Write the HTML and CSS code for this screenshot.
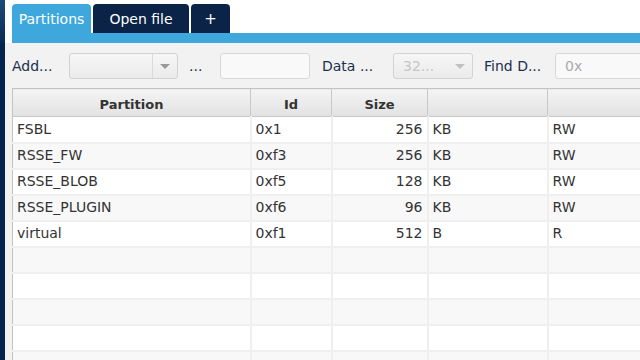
FILE: index.html
```html
<!DOCTYPE html>
<html lang="en">

<head>
    <meta charset="UTF-8">
    <title>Partitions</title>
    <link rel="stylesheet" href="styles.css">
</head>

<body>
    <div class="sidebar"></div>
    <div class="main">
        <div class="tabs">
            <div class="tab active tabPartitions">Partitions</div>
            <div class="tab tabOpen">Open file</div>
            <div class="tab tabPlus">+</div>
        </div>
        <div class="tabLine"></div>

        <div class="content">
            <div class="toolbar">
                <span class="label lblAdd">Add...</span>
                <div class="combo comboAdd">
                    <span class="comboText"></span>
                    <span class="comboArrow"><i class="tri"></i></span>
                </div>
                <span class="label lblDots">...</span>
                <div class="field fieldA"></div>
                <span class="label lblData">Data ...</span>
                <div class="combo comboData disabled">
                    <span class="comboText">32...</span>
                    <span class="comboArrow noSep"><i class="tri"></i></span>
                </div>
                <span class="label lblFind">Find D...</span>
                <div class="field fieldFind"><span class="placeholder">0x</span></div>
            </div>

            <table class="grid">
                <thead>
                    <tr>
                        <th class="c1">Partition</th>
                        <th class="c2">Id</th>
                        <th class="c3">Size</th>
                        <th class="c4"></th>
                        <th class="c5"></th>
                    </tr>
                </thead>
                <tbody>
                    <tr>
                        <td>FSBL</td>
                        <td>0x1</td>
                        <td class="num">256</td>
                        <td>KB</td>
                        <td>RW</td>
                    </tr>
                    <tr>
                        <td>RSSE_FW</td>
                        <td>0xf3</td>
                        <td class="num">256</td>
                        <td>KB</td>
                        <td>RW</td>
                    </tr>
                    <tr>
                        <td>RSSE_BLOB</td>
                        <td>0xf5</td>
                        <td class="num">128</td>
                        <td>KB</td>
                        <td>RW</td>
                    </tr>
                    <tr>
                        <td>RSSE_PLUGIN</td>
                        <td>0xf6</td>
                        <td class="num">96</td>
                        <td>KB</td>
                        <td>RW</td>
                    </tr>
                    <tr>
                        <td>virtual</td>
                        <td>0xf1</td>
                        <td class="num">512</td>
                        <td>B</td>
                        <td>R</td>
                    </tr>
                    <tr><td></td><td></td><td></td><td></td><td></td></tr>
                    <tr><td></td><td></td><td></td><td></td><td></td></tr>
                    <tr><td></td><td></td><td></td><td></td><td></td></tr>
                    <tr><td></td><td></td><td></td><td></td><td></td></tr>
                    <tr><td></td><td></td><td></td><td></td><td></td></tr>
                </tbody>
            </table>
        </div>
    </div>
</body>

</html>
```

FILE: styles.css
```css
*,
*::after,
*::before {
    box-sizing: border-box;
}

html,
body {
    margin: 0;
    height: 100%;
    overflow: hidden;
}

body {
    display: flex;
    font-family: 'DejaVu Sans', Verdana, sans-serif;
    font-size: 14px;
    background-color: #ffffff;
}

.sidebar {
    width: 5px;
    flex-shrink: 0;
    background: linear-gradient(#1d4a78 0px, #0b2d57 40px, #02244d 44px, #02244d 100%);
}

.main {
    flex: 1;
    min-width: 0;
    display: flex;
    flex-direction: column;
}

/* tab strip */

.tabs {
    display: flex;
    flex-shrink: 0;
    gap: 2px;
    padding: 4px 0 0 7px;
    height: 33px;
}

.tab {
    height: 29px;
    border-radius: 4px 4px 0 0;
    color: #ffffff;
    background-color: #0a2347;
    display: flex;
    align-items: center;
    justify-content: center;
    padding-top: 1px;
}

.tab.active {
    background-color: #3ea8dc;
}

.tabPartitions {
    width: 79px;
}

.tabOpen {
    width: 96px;
}

.tabPlus {
    width: 39px;
    font-size: 15px;
}

.tabLine {
    flex-shrink: 0;
    height: 10px;
    margin-left: 7px;
    background-color: #3ea8dc;
}

.content {
    flex: 1;
    min-height: 0;
    background-color: #f2f2f2;
    padding-left: 7px;
}

/* toolbar */

.toolbar {
    display: flex;
    align-items: center;
    height: 45px;
    padding-top: 1px;
    white-space: nowrap;
}

.label {
    flex-shrink: 0;
    color: #1b2f4e;
}

.lblAdd {
    width: 57px;
}

.lblDots {
    width: 31px;
    margin-left: 11px;
}

.lblData {
    width: 71px;
    margin-left: 12px;
}

.lblFind {
    width: 71px;
    margin-left: 11px;
}

.combo {
    flex-shrink: 0;
    height: 26px;
    display: flex;
    border: 1px solid #d2d2d2;
    border-radius: 3px;
    background: linear-gradient(#f6f6f6, #ebebeb);
}

.comboAdd {
    width: 109px;
}

.comboData {
    width: 80px;
}

.comboText {
    flex: 1;
    padding: 4px 0 0 9px;
    color: #c6c6c6;
}

.comboArrow {
    width: 25px;
    border-left: 1px solid #dadada;
    display: flex;
    align-items: center;
    justify-content: center;
}

.comboArrow.noSep {
    border-left: none;
}

.tri {
    width: 0;
    height: 0;
    border-left: 5px solid transparent;
    border-right: 5px solid transparent;
    border-top: 5px solid #9a9a9a;
}

.disabled .tri {
    border-top-color: #c0c0c0;
}

.field {
    flex-shrink: 0;
    height: 26px;
    border: 1px solid #d8d8d8;
    border-radius: 3px;
    background-color: #f9f9f9;
}

.fieldA {
    width: 90px;
}

.fieldFind {
    width: 100px;
    padding: 4px 0 0 9px;
}

.placeholder {
    color: #a9a9a9;
}

/* table */

.grid {
    border-collapse: collapse;
    table-layout: fixed;
    width: 640px;
    border: 1px solid #c3c3c3;
    color: #333333;
    background-color: #ffffff;
}

.grid th {
    height: 28px;
    font-size: 13px;
    font-weight: bold;
    color: #333333;
    background: linear-gradient(#f4f4f4, #e2e2e2);
    border-right: 1px solid #c8c8c8;
    border-bottom: 1px solid #c8c8c8;
    text-align: center;
    padding: 3px 0 0 0;
}

.c1 {
    width: 238px;
}

.c2 {
    width: 81px;
}

.c3 {
    width: 96px;
}

.c4 {
    width: 120px;
}

.grid td {
    height: 26px;
    padding: 0 4px 1px 4px;
    border-right: 2px solid #efefef;
    border-bottom: 2px solid #efefef;
    white-space: nowrap;
    overflow: hidden;
}

.grid tbody tr:nth-child(even) td {
    background-color: #f8f8f8;
}

.grid td.num {
    text-align: right;
    padding-right: 4px;
}
```
